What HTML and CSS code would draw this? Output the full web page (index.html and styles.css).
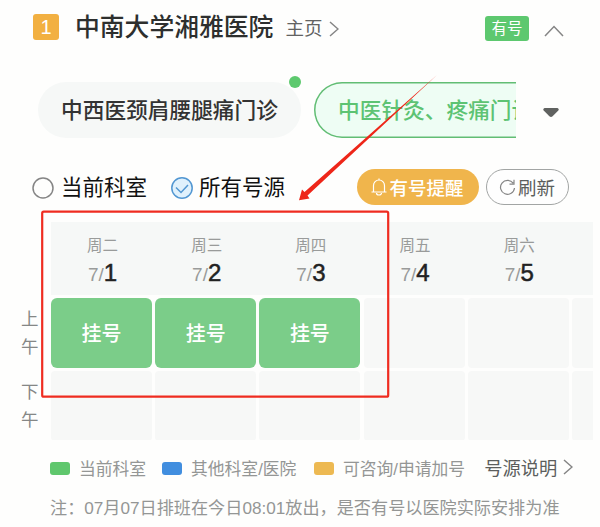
FILE: index.html
```
<!DOCTYPE html>
<html lang="zh-CN">
<head>
    <meta charset="UTF-8">
    <meta name="viewport" content="width=device-width, initial-scale=1.0">
    <title>中南大学湘雅医院</title>
    <link rel="stylesheet" href="styles.css">
</head>
<body>
    <div class="header">
        <span class="rank">1</span>
        <h1>中南大学湘雅医院</h1>
        <a class="home">主页
            <svg width="10" height="16" viewBox="0 0 10 16"><path d="M1 1l8 7-8 7"/></svg>
        </a>
        <span class="tag">有号</span>
        <svg class="collapse" width="20" height="12" viewBox="0 0 20 12"><path d="M1 11l9-9.5L19 11"/></svg>
    </div>

    <div class="tabs">
        <div class="tab-list">
            <div class="tab">中西医颈肩腰腿痛门诊<i class="dot"></i></div>
            <div class="tab active">中医针灸、疼痛门诊</div>
        </div>
        <svg class="caret" width="16" height="9" viewBox="0 0 16 9"><path d="M1.500 0h13q2 1.200 .8 2.600L9.600 8.200q-1.600 1.400-3.200 0L.7 2.600Q-.5 1.200 1.500 0z"/></svg>
    </div>

    <div class="filters">
        <svg class="radio" width="22" height="22" viewBox="0 0 22 22"><circle cx="11" cy="11" r="10"/></svg>
        <span class="radio-label">当前科室</span>
        <svg class="radio checked" width="22" height="22" viewBox="0 0 22 22"><circle cx="11" cy="11" r="10.200"/><path d="M5 10.500l5 5L17 8"/></svg>
        <span class="radio-label">所有号源</span>
        <button class="btn remind">
            <svg width="16" height="18" viewBox="0 0 16 18"><path d="M.5 14h15M2.500 14V7.500a5.500 5.500 0 0 1 11 0V14M8 2V.5M5.500 15a2.500 2 0 0 0 5 0"/></svg>有号提醒
        </button>
        <button class="btn refresh">
            <svg width="17" height="17" viewBox="0 0 17 17"><path d="M14.200 4.200A7 7 0 1 0 15.500 9M15 .8v4.400h-4.500"/></svg>刷新
        </button>
    </div>

    <div class="schedule">
        <div class="periods">
            <div class="period">上午</div>
            <div class="period">下午</div>
        </div>
        <div class="table">
            <div class="days">
                <div class="day">周二<p>7/<b>1</b></p></div>
                <div class="day">周三<p>7/<b>2</b></p></div>
                <div class="day">周四<p>7/<b>3</b></p></div>
                <div class="day">周五<p>7/<b>4</b></p></div>
                <div class="day">周六<p>7/<b>5</b></p></div>
            </div>
            <div class="slots">
                <div class="slot open">挂号</div>
                <div class="slot open">挂号</div>
                <div class="slot open">挂号</div>
                <div class="slot"></div>
                <div class="slot"></div>
                <div class="slot"></div>
                <div class="slot"></div>
                <div class="slot"></div>
                <div class="slot"></div>
                <div class="slot"></div>
                <div class="slot"></div>
                <div class="slot"></div>
            </div>
        </div>
    </div>

    <div class="legend">
        <i class="swatch green"></i><span class="current">当前科室</span>
        <i class="swatch blue"></i><span class="other">其他科室/医院</span>
        <i class="swatch orange"></i><span>可咨询/申请加号</span>
        <a class="explain">号源说明
            <svg width="10" height="16" viewBox="0 0 10 16"><path d="M1 1l8 7-8 7"/></svg>
        </a>
    </div>
    <p class="note">注：07月07日排班在今日08:01放出，是否有号以医院实际安排为准</p>

    <!-- red marker box and arrow over the bookable days -->
    <svg class="marker" width="600" height="527" viewBox="0 0 600 527">
        <rect x="42.200" y="211.700" width="346" height="185" rx="1.500"/>
        <path d="M437 75L307.500 195.500L309.500 198.500L299 200.300L302 189.500L304.500 192Z"/>
    </svg>
</body>
</html>
```

FILE: styles.css
```
* {
    box-sizing: border-box;
}

body {
    margin: 0;
    width: 600px;
    height: 527px;
    overflow: hidden;
    position: relative;
    background: #fefefd;
    color: #333;
    font-family: "Liberation Sans", "Noto Sans CJK SC", sans-serif;
    white-space: nowrap;
}

svg {
    display: block;
    flex: none;
    fill: none;
    stroke: #858585;
    stroke-width: 1.5;
}

.header {
    display: flex;
    align-items: center;
    height: 55px;
    padding: 0 36px 0 33px;
}

.rank {
    width: 26px;
    height: 26px;
    margin: -1px 16px 0 0;
    border-radius: 3px;
    background: #f2b041;
    color: #fff;
    font-size: 20px;
    line-height: 27px;
    text-align: center;
}

h1 {
    margin: 0 12px 0 0;
    font-size: 24.800px;
    font-weight: 500;
    line-height: 36px;
    color: #2d2f2e;
}

.home {
    display: flex;
    align-items: center;
    gap: 7px;
    margin-top: -2px;
    font-size: 18.500px;
    color: #626262;
}

.home svg {
    margin-top: 4px;
}

.tag {
    width: 44px;
    height: 25px;
    margin-top: 1px;
    margin-left: auto;
    border-radius: 3px;
    background: #5dc86f;
    color: #fff;
    font-size: 15.500px;
    line-height: 25px;
    text-align: center;
}

.collapse {
    margin: 6px 0 0 15px;
}

.tabs {
    display: flex;
    align-items: center;
    padding: 17px 0 0 38px;
}

.tab-list {
    display: flex;
    gap: 13px;
    width: 478px;
    margin: -10px 0 0;
    padding-top: 20px;
    overflow: hidden;
}

.tab {
    position: relative;
    flex: none;
    width: 263px;
    height: 56px;
    padding-left: 23px;
    border-radius: 28px;
    background: #f6f8f7;
    font-size: 21.700px;
    font-weight: 500;
    line-height: 57px;
}

.tab.active {
    box-shadow: inset 0 0 0 1.500px #62bd74;
    background: #eefdf4;
    color: #5dc373;
    padding-left: 24px;
}

.dot {
    position: absolute;
    top: -6px;
    right: 0;
    width: 12px;
    height: 12px;
    border-radius: 50%;
    background: #5dc96e;
}

.caret {
    margin: 14px 0 0 27px;
    fill: #606260;
    stroke: none;
}

.filters {
    display: flex;
    align-items: center;
    height: 36px;
    margin-top: 31px;
    padding-left: 32px;
}

.radio {
    margin-top: 2px;
}

.radio.checked {
    margin-left: 24px;
}

.radio.checked circle {
    fill: #e0f1fc;
}

.radio.checked circle,
.radio.checked path {
    stroke: #5297d2;
}

.radio-label {
    width: 86px;
    margin: -3px 0 0 7px;
    font-size: 21.500px;
    color: #111;
}

.checked + .radio-label {
    margin-left: 6px;
}

.btn {
    display: flex;
    align-items: center;
    height: 36px;
    padding: 0;
    border: none;
    border-radius: 18px;
    font-family: inherit;
}

.remind {
    width: 122px;
    margin-left: 71.500px;
    padding: 0 0 1px 14px;
    gap: 3px;
    background: #f0b54c;
    color: #fff;
    font-size: 18.500px;
    font-weight: 500;
}

.remind svg {
    stroke: #fff;
    stroke-width: 1.2;
}

.refresh {
    width: 83px;
    margin-left: 7.500px;
    padding: 0 0 1px 12px;
    gap: 2px;
    border: 1.500px solid #a2a5a4;
    background: #fefefe;
    color: #5c5e5d;
    font-size: 18.500px;
}

.refresh svg {
    margin-top: 2px;
    stroke-width: 1.2;
}

.schedule {
    display: flex;
    margin-top: 17px;
}

.periods {
    width: 51px;
    padding-top: 83px;
}

.period {
    width: 18px;
    height: 56px;
    margin-left: 21px;
    color: #858786;
    font-size: 17.500px;
    line-height: 28px;
    white-space: normal;
}

.period + .period {
    margin-top: 17px;
}

.table {
    width: 542px;
    height: 218px;
    overflow: hidden;
}

.days {
    display: flex;
    gap: 3.200px;
    height: 73px;
    background: #f6f8f7;
}

.day {
    width: 101px;
    padding: 12px 0 0 2px;
    color: #999b9a;
    font-size: 15.500px;
    line-height: 23px;
    text-align: center;
}

.day p {
    margin: 1px 0 0;
    color: #999b9a;
    font-size: 19px;
    line-height: 30px;
}

.day b {
    color: #222;
    font-size: 24px;
    font-weight: 400;
    -webkit-text-stroke: .5px #222;
}

.slots {
    display: grid;
    grid-template-columns: repeat(6, 101px);
    grid-auto-rows: 70px;
    gap: 3px 3.200px;
    margin-top: 3px;
}

.slot {
    border-radius: 4px;
    background: #f7f8f7;
    font-size: 20px;
    line-height: 72px;
    text-align: center;
}

.open {
    border-radius: 6px;
    background: #7bcd89;
    color: #fff;
    font-weight: 500;
}

.legend {
    display: flex;
    align-items: center;
    height: 30px;
    margin-top: 13px;
    padding-left: 50px;
    color: #949695;
    font-size: 16.800px;
}

.swatch {
    width: 20px;
    height: 13px;
    margin: 1px 9px 0 0;
    border-radius: 3px;
}

.green {
    background: #5fc76d;
}

.blue {
    background: #418edf;
}

.orange {
    background: #edb952;
}

.current {
    width: 83px;
}

.other {
    width: 123px;
}

.explain {
    display: flex;
    align-items: center;
    gap: 6px;
    margin: -2px 0 0 19px;
    color: #5c5e5d;
    font-size: 18.300px;
}

.note {
    margin: 12px 0 0 50px;
    color: #949695;
    font-size: 17.150px;
    line-height: 26px;
}

.marker {
    position: absolute;
    top: 0;
    left: 0;
    pointer-events: none;
}

.marker rect {
    stroke: #ef2c20;
    stroke-width: 2.200;
}

.marker path {
    fill: #ee2619;
    stroke: none;
}
```
